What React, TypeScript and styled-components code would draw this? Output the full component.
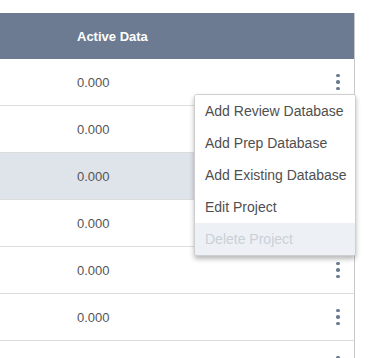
import React from "react";
import styled, { createGlobalStyle } from "styled-components";

const GlobalStyle = createGlobalStyle`
  html, body {
    margin: 0;
    padding: 0;
    background: #ffffff;
    font-family: "Liberation Sans", Arial, Helvetica, sans-serif;
  }
`;

const Page = styled.div`
  position: relative;
  width: 375px;
  height: 358px;
  overflow: hidden;
  padding-top: 13px;
  box-sizing: border-box;
`;

const Table = styled.div`
  width: 355px;
  border-right: 1px solid #c8c8c8;
  box-sizing: border-box;
`;

const HeaderRow = styled.div`
  display: grid;
  grid-template-columns: 77px 1fr 40px;
  align-items: center;
  height: 46px;
  background: #6c7b91;
  color: #ffffff;
  font-size: 13px;
  font-weight: bold;
`;

const Row = styled.div<{ $active?: boolean }>`
  display: grid;
  grid-template-columns: 77px 1fr 40px;
  align-items: center;
  height: 46px;
  border-bottom: 1px solid #dcdcdc;
  background: ${(p) => (p.$active ? "#dfe3ea" : "#ffffff")};
  color: #555555;
  font-size: 13px;
`;

const Cell = styled.div`
  white-space: nowrap;
`;

const Kebab = styled.div`
  display: flex;
  flex-direction: column;
  align-items: center;
  gap: 3px;
  margin-left: 22px;
  width: 4px;
`;

const Dot = styled.span`
  width: 3.5px;
  height: 3.5px;
  border-radius: 50%;
  background: #6c7b91;
`;

const Menu = styled.div`
  position: absolute;
  top: 94px;
  left: 194px;
  width: 162px;
  background: #ffffff;
  border: 1px solid #cfcfcf;
  border-radius: 3px;
  box-shadow: 0 3px 5px rgba(0, 0, 0, 0.28);
  overflow: hidden;
  box-sizing: border-box;
`;

const MenuItem = styled.div<{ $disabled?: boolean }>`
  height: 32px;
  display: flex;
  align-items: center;
  padding-left: 10px;
  font-size: 14px;
  white-space: nowrap;
  color: ${(p) => (p.$disabled ? "#c9d0d8" : "#4f4f4f")};
  background: ${(p) => (p.$disabled ? "#edf1f5" : "#ffffff")};
`;

const rows = [false, false, true, false, false, false, false];

const menuItems = [
  { label: "Add Review Database" },
  { label: "Add Prep Database" },
  { label: "Add Existing Database" },
  { label: "Edit Project" },
  { label: "Delete Project", disabled: true },
];

const KebabIcon = () => (
  <Kebab>
    <Dot />
    <Dot />
    <Dot />
  </Kebab>
);

export default function App() {
  return (
    <Page>
      <GlobalStyle />
      <Table>
        <HeaderRow>
          <Cell />
          <Cell>Active Data</Cell>
          <Cell />
        </HeaderRow>
        {rows.map((active, i) => (
          <Row key={i} $active={active}>
            <Cell />
            <Cell>{i < 6 ? "0.000" : ""}</Cell>
            <Cell>
              <KebabIcon />
            </Cell>
          </Row>
        ))}
      </Table>
      <Menu>
        {menuItems.map((item) => (
          <MenuItem key={item.label} $disabled={item.disabled}>
            {item.label}
          </MenuItem>
        ))}
      </Menu>
    </Page>
  );
}
